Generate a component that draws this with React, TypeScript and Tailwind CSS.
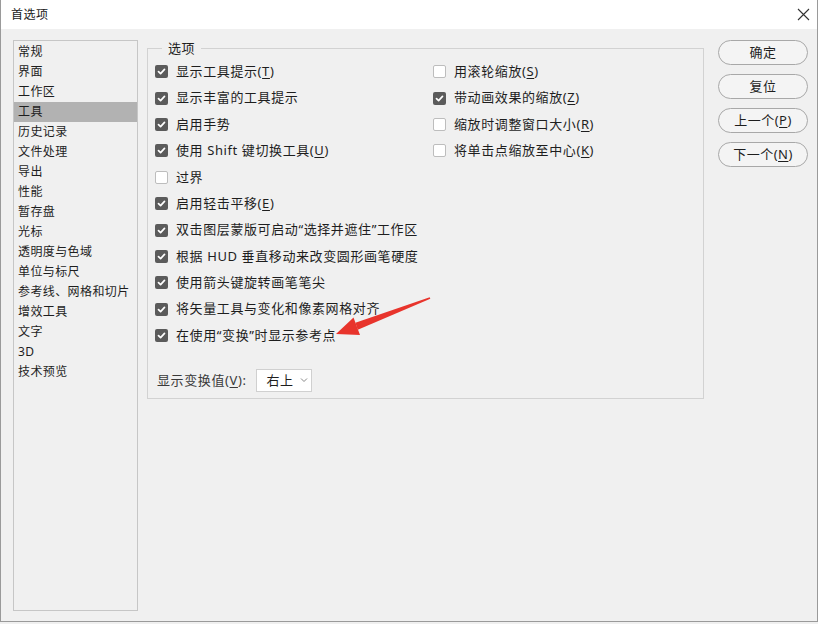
import React from "react";

const FONT = { fontFamily: '"Noto Sans", "Noto Sans CJK SC", sans-serif' };

function Mn({ pre, k, post }: { pre: string; k: string; post?: string }) {
  return (
    <span>
      {pre}(<span className="underline underline-offset-2">{k}</span>){post ?? ""}
    </span>
  );
}

function Check({ checked }: { checked: boolean }) {
  if (checked) {
    return (
      <span className="w-[13px] h-[13px] rounded-[2px] bg-[#5b5b5b] flex items-center justify-center shrink-0">
        <svg width="9" height="9" viewBox="0 0 9 9">
          <path d="M1.5 4.6 L3.6 6.6 L7.5 2.4" stroke="#ffffff" strokeWidth="1.7" fill="none" strokeLinecap="round" strokeLinejoin="round" />
        </svg>
      </span>
    );
  }
  return <span className="w-[13px] h-[13px] rounded-[2px] bg-white border border-[#bdbdbd] shrink-0" />;
}

function Row({ checked, children }: { checked: boolean; children: React.ReactNode }) {
  return (
    <div className="h-[26.4px] flex items-center gap-[8px] text-[13px] text-[#1e1e1e] tracking-[0.6px] whitespace-nowrap">
      <Check checked={checked} />
      <span>{children}</span>
    </div>
  );
}

const listItems = [
  "常规",
  "界面",
  "工作区",
  "工具",
  "历史记录",
  "文件处理",
  "导出",
  "性能",
  "暂存盘",
  "光标",
  "透明度与色域",
  "单位与标尺",
  "参考线、网格和切片",
  "增效工具",
  "文字",
  "3D",
  "技术预览",
];

function Btn({ children }: { children: React.ReactNode }) {
  return (
    <div className="h-[25px] w-[90px] rounded-full border border-[#a8a8a8] bg-[#f4f4f4] flex items-center justify-center text-[13px] text-[#1e1e1e] tracking-[0.5px]">
      {children}
    </div>
  );
}

export default function App() {
  return (
    <div style={FONT} className="relative w-[818px] h-[624px] bg-[#f0f0f0] overflow-hidden">
      <div className="w-[818px] h-[622px] border-l border-r border-b border-[#9a9a9a] flex flex-col">
        {/* title bar */}
        <div className="h-[29px] bg-white flex items-center justify-between pl-[10px] pr-[7px] shrink-0">
          <span className="text-[12px] text-[#1a1a1a] tracking-[0.5px]">首选项</span>
          <svg width="13" height="13" viewBox="0 0 13 13">
            <path d="M1 1 L12 12 M12 1 L1 12" stroke="#333" strokeWidth="1.1" />
          </svg>
        </div>
        {/* body */}
        <div className="flex flex-1 pl-[12px]">
          {/* list */}
          <div className="mt-[11px] w-[125px] h-[571px] border border-[#c6c6c6] pt-px">
            {listItems.map((it) => (
              <div
                key={it}
                className={
                  "h-[20px] flex items-center pl-[4px] text-[12px] text-[#1e1e1e] tracking-[0.4px] " +
                  (it === "工具" ? "bg-[#b2b2b2]" : "")
                }
              >
                {it}
              </div>
            ))}
          </div>
          {/* group */}
          <fieldset className="ml-[9px] mt-[10px] w-[557px] h-[360px] border border-[#d2d2d2] pl-[7px] pt-0">
            <legend className="ml-[7px] px-[6px] text-[13px] text-[#1e1e1e] tracking-[0.6px]">选项</legend>
            <div className="flex">
              <div className="w-[278px] flex flex-col">
                <Row checked><Mn pre="显示工具提示" k="T" /></Row>
                <Row checked>显示丰富的工具提示</Row>
                <Row checked>启用手势</Row>
                <Row checked>使用 Shift 键切换工具(<span className="underline underline-offset-2">U</span>)</Row>
                <Row checked={false}>过界</Row>
                <Row checked><Mn pre="启用轻击平移" k="E" /></Row>
                <Row checked>双击图层蒙版可启动“选择并遮住”工作区</Row>
                <Row checked>根据 HUD 垂直移动来改变圆形画笔硬度</Row>
                <Row checked>使用箭头键旋转画笔笔尖</Row>
                <Row checked>将矢量工具与变化和像素网格对齐</Row>
                <Row checked>在使用“变换”时显示参考点</Row>
              </div>
              <div className="flex flex-col">
                <Row checked={false}><Mn pre="用滚轮缩放" k="S" /></Row>
                <Row checked><Mn pre="带动画效果的缩放" k="Z" /></Row>
                <Row checked={false}><Mn pre="缩放时调整窗口大小" k="R" /></Row>
                <Row checked={false}><Mn pre="将单击点缩放至中心" k="K" /></Row>
              </div>
            </div>
            <div className="mt-[20px] flex items-center gap-[9px] pl-[2px]">
              <span className="text-[13px] text-[#3a3a3a] tracking-[0.6px]">
                显示变换值(<span className="underline underline-offset-2">V</span>):
              </span>
              <div className="w-[56px] h-[23px] bg-white border border-[#d0d0d0] flex items-center pl-[10px] gap-[6px]">
                <span className="text-[13px] text-[#1e1e1e] tracking-[0.6px]">右上</span>
                <svg width="8" height="6" viewBox="0 0 8 6">
                  <path d="M1 1.5 L4 4.5 L7 1.5" stroke="#888" strokeWidth="1" fill="none" />
                </svg>
              </div>
            </div>
          </fieldset>
          {/* buttons */}
          <div className="ml-[14px] mt-[11px] flex flex-col gap-[9px]">
            <Btn>确定</Btn>
            <Btn>复位</Btn>
            <Btn>上一个(<span className="underline underline-offset-2">P</span>)</Btn>
            <Btn>下一个(<span className="underline underline-offset-2">N</span>)</Btn>
          </div>
        </div>
      </div>
      {/* red annotation arrow */}
      <svg className="absolute left-0 top-0 pointer-events-none" width="818" height="624">
        <path d="M430.3 298.8 L429.7 297.2 L355.4 322.8 L357.8 329.8 Z" fill="#e8342c" />
        <path d="M336 334 L353.5 317.5 L360 335 Z" fill="#e8342c" />
      </svg>
    </div>
  );
}
